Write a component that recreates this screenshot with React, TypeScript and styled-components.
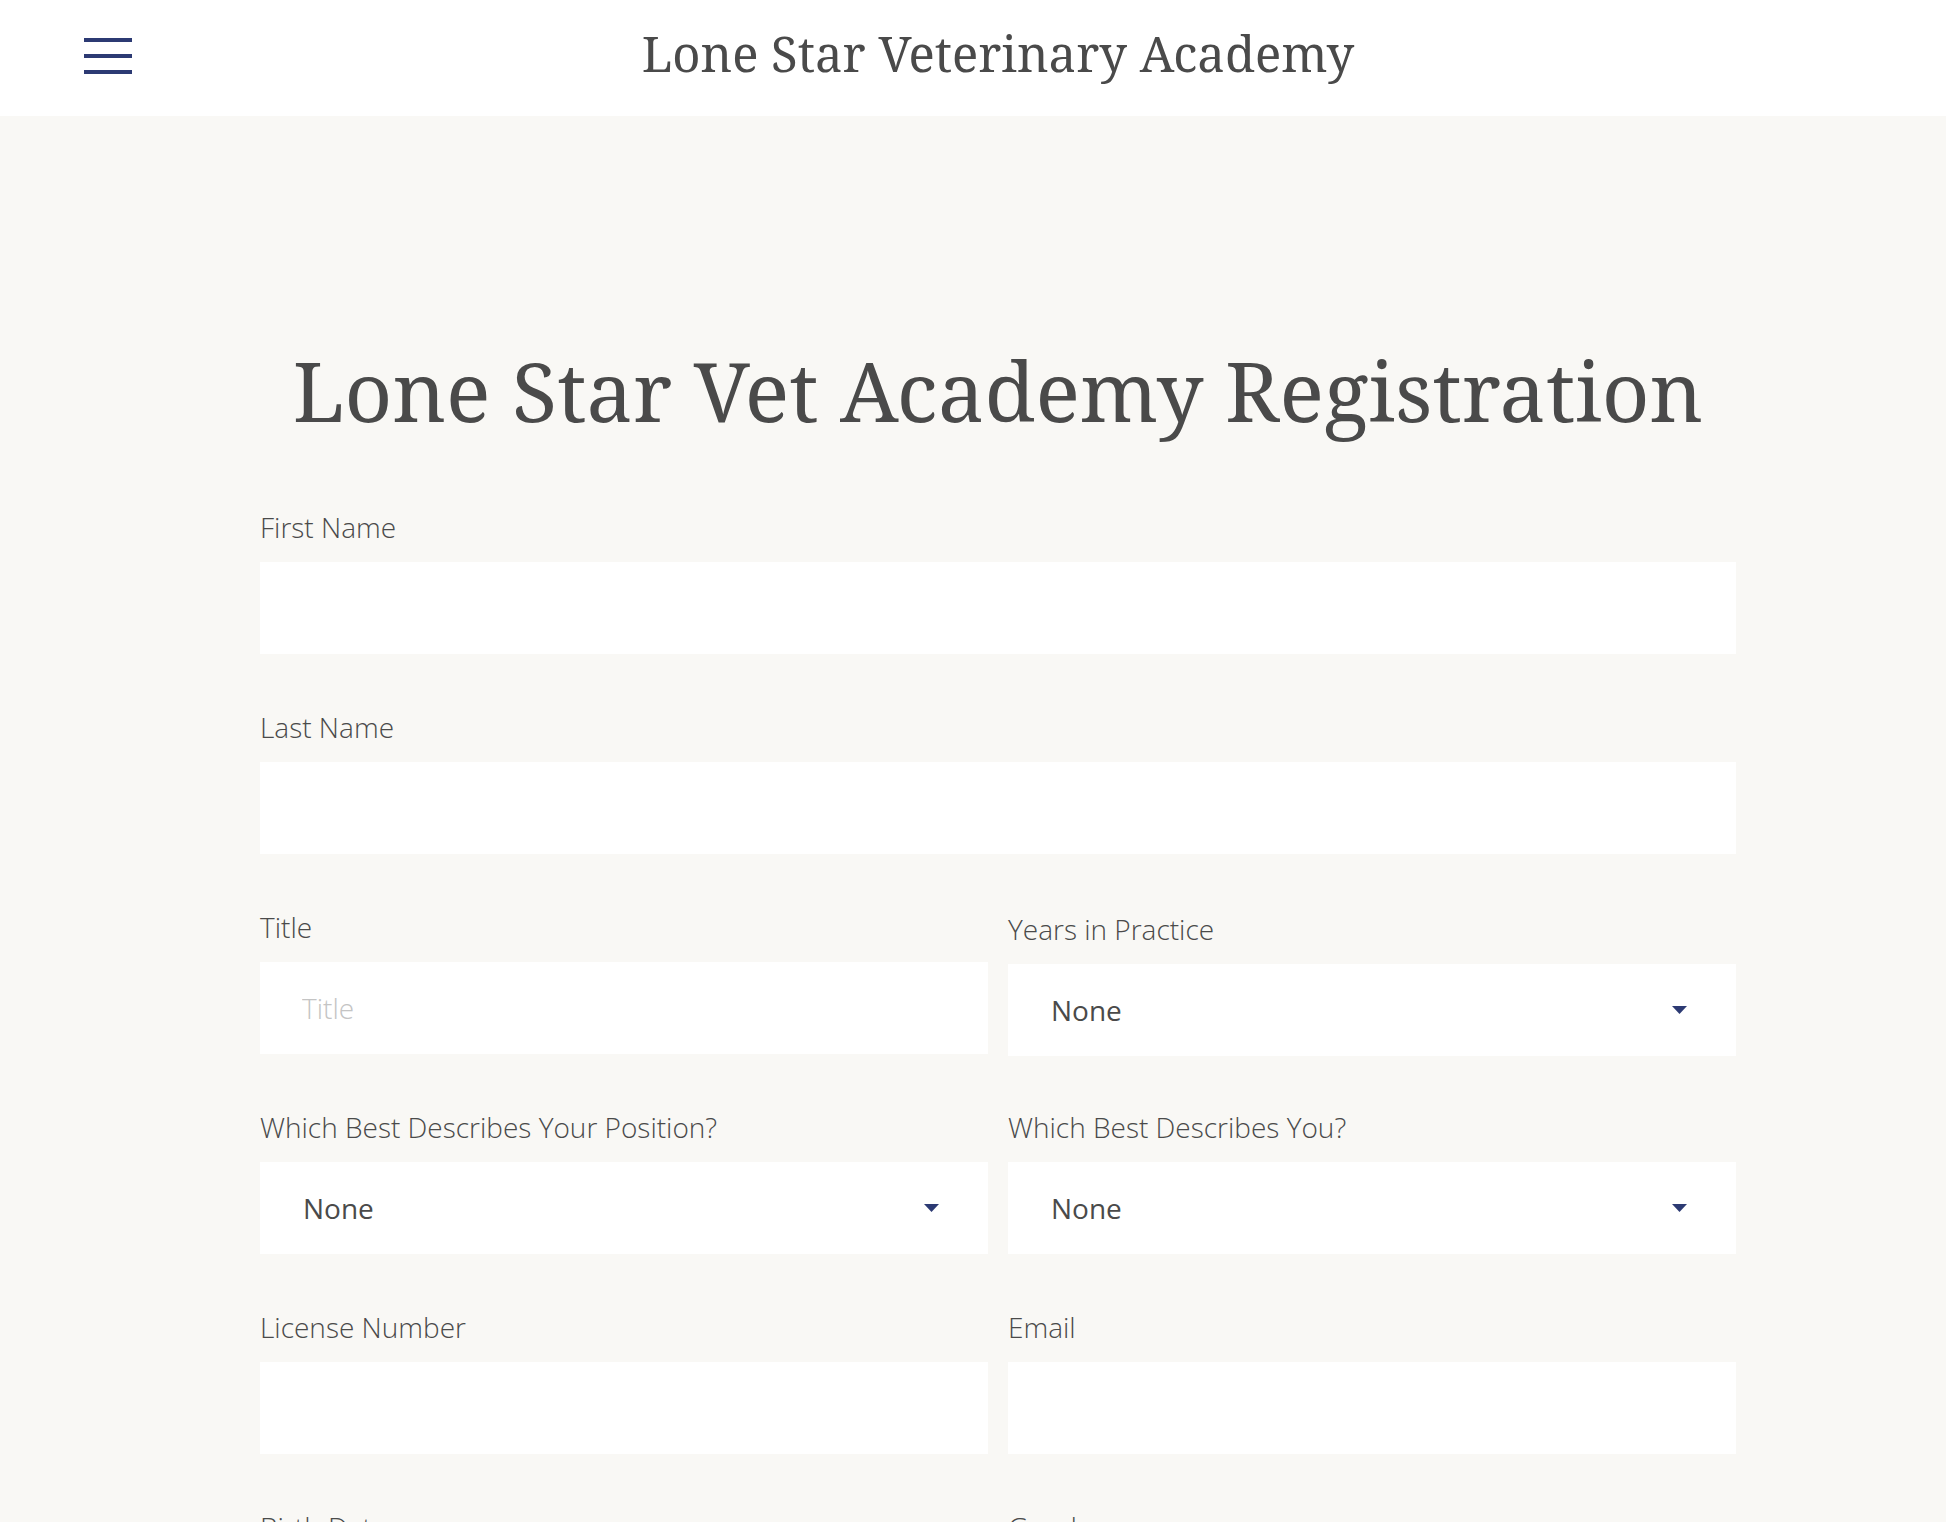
import React from "react";
import styled, { createGlobalStyle } from "styled-components";

const Global = createGlobalStyle`
  html, body { margin: 0; padding: 0; }
  body { background: #f9f8f5; font-family: "Open Sans", "Liberation Sans", sans-serif; color: #4a4a4a; }
  * { box-sizing: border-box; }
`;

const Header = styled.header`
  height: 116px;
  background: #ffffff;
  display: grid;
  grid-template-columns: 1fr auto 1fr;
  align-items: center;
  padding-left: 50px;
`;

const Burger = styled.button`
  justify-self: start;
  margin: 0 0 4px 34px;
  width: 48px;
  padding: 0;
  border: 0;
  background: transparent;
  display: flex;
  flex-direction: column;
  gap: 12px;
  cursor: pointer;
  span { display: block; height: 4px; background: #2c3a73; }
`;

const SiteTitle = styled.div`
  font-family: "Noto Serif", "DejaVu Serif", serif;
  font-size: 49px;
  line-height: 60px;
  margin-bottom: 10px;
  color: #4a4a4a;
  white-space: nowrap;
`;

const Main = styled.main`
  padding: 224px 0 80px 50px;
  display: flex;
  flex-direction: column;
  align-items: center;
`;

const PageTitle = styled.h1`
  margin: 0 0 68px;
  font-family: "Noto Serif", "DejaVu Serif", serif;
  font-weight: 400;
  font-size: 83px;
  line-height: 100px;
  color: #4a4a4a;
  white-space: nowrap;
`;

const Form = styled.form`
  width: 1476px;
  display: grid;
  grid-template-columns: 1fr 1fr;
  column-gap: 20px;
  row-gap: 54px;
`;

const Field = styled.div<{ $full?: boolean; $shift?: number }>`
  grid-column: ${(p) => (p.$full ? "1 / -1" : "auto")};
  margin-top: ${(p) => p.$shift ?? 0}px;
  margin-bottom: ${(p) => -(p.$shift ?? 0)}px;
  display: flex;
  flex-direction: column;
`;

const Label = styled.label`
  font-family: "Open Sans", sans-serif;
  font-weight: 300;
  font-size: 28px;
  line-height: 38px;
  color: #4a4a4a;
  margin-bottom: 16px;
`;

const Input = styled.input`
  height: 92px;
  border: 0;
  outline: none;
  background: #ffffff;
  padding: 0 42px;
  font-family: "Open Sans", sans-serif;
  font-size: 28px;
  color: #4a4a4a;
  &::placeholder { color: #c4c4c4; font-weight: 300; }
`;

const Select = styled.div`
  height: 92px;
  background: #ffffff;
  display: flex;
  align-items: center;
  justify-content: space-between;
  padding: 0 49px 0 43px;
  font-family: "Open Sans", sans-serif;
  font-size: 28px;
  color: #4a4a4a;
  cursor: pointer;
`;

const Arrow = () => (
  <svg width="15" height="8" viewBox="0 0 15 8" aria-hidden="true">
    <polygon points="0,0 15,0 7.5,8" fill="#2c3a73" />
  </svg>
);

export default function App() {
  return (
    <>
      <Global />
      <Header>
        <Burger aria-label="Menu">
          <span />
          <span />
          <span />
        </Burger>
        <SiteTitle>Lone Star Veterinary Academy</SiteTitle>
        <div />
      </Header>
      <Main>
        <PageTitle>Lone Star Vet Academy Registration</PageTitle>
        <Form>
          <Field $full>
            <Label>First Name</Label>
            <Input />
          </Field>
          <Field $full>
            <Label>Last Name</Label>
            <Input />
          </Field>
          <Field>
            <Label>Title</Label>
            <Input placeholder="Title" />
          </Field>
          <Field $shift={2}>
            <Label>Years in Practice</Label>
            <Select>
              None
              <Arrow />
            </Select>
          </Field>
          <Field>
            <Label>Which Best Describes Your Position?</Label>
            <Select>
              None
              <Arrow />
            </Select>
          </Field>
          <Field>
            <Label>Which Best Describes You?</Label>
            <Select>
              None
              <Arrow />
            </Select>
          </Field>
          <Field>
            <Label>License Number</Label>
            <Input />
          </Field>
          <Field>
            <Label>Email</Label>
            <Input />
          </Field>
          <Field>
            <Label>Birth Date</Label>
            <Input />
          </Field>
          <Field>
            <Label>Gender</Label>
            <Select>
              None
              <Arrow />
            </Select>
          </Field>
        </Form>
      </Main>
    </>
  );
}
